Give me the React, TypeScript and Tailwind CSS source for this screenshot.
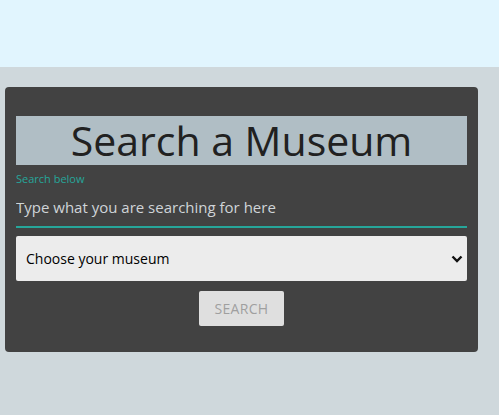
export default function App() {
  return (
    <div
      className="min-h-[415px] bg-[#cfd8dc]"
      style={{ fontFamily: '"Open Sans", "Noto Sans", sans-serif' }}
    >
      <div className="h-[67px] bg-[#e1f5fe]" />
      <div className="pt-[20px] pl-[5px]">
        <div className="w-[473px] rounded-[4px] bg-[#424242] px-[11px] pt-[29px] pb-[26px]">
          <h1 className="flex h-[49px] items-center justify-center bg-[#b0bec5] text-[41px] leading-none text-[#212121]">
            Search a Museum
          </h1>
          <label className="mt-[7px] block text-[11px] leading-[14px] text-[#26a69a]">
            Search below
          </label>
          <input
            type="text"
            placeholder="Type what you are searching for here"
            className="mt-[4px] block h-[38px] w-full border-b-2 border-[#26a69a] bg-transparent pb-[3px] text-[15px] text-[#d4d8db] outline-none placeholder:text-[#cfd4d8]"
          />
          <div className="relative mt-[8px]">
            <select className="block h-[45px] w-full appearance-none rounded-[2px] bg-[#ececec] pl-[10px] text-[14px] text-black outline-none">
              <option>Choose your museum</option>
            </select>
            <svg
              className="pointer-events-none absolute right-[4px] top-[19px]"
              width="12"
              height="8"
              viewBox="0 0 12 8"
            >
              <path d="M1.5 1.5 L6 6 L10.5 1.5" fill="none" stroke="#111" strokeWidth="2.4" />
            </svg>
          </div>
          <div className="mt-[10px] flex justify-center">
            <button className="h-[35px] w-[85px] rounded-[2px] bg-[#dfdfdf] text-[14px] tracking-[0.3px] text-[#9f9f9f]">
              SEARCH
            </button>
          </div>
        </div>
      </div>
    </div>
  );
}
